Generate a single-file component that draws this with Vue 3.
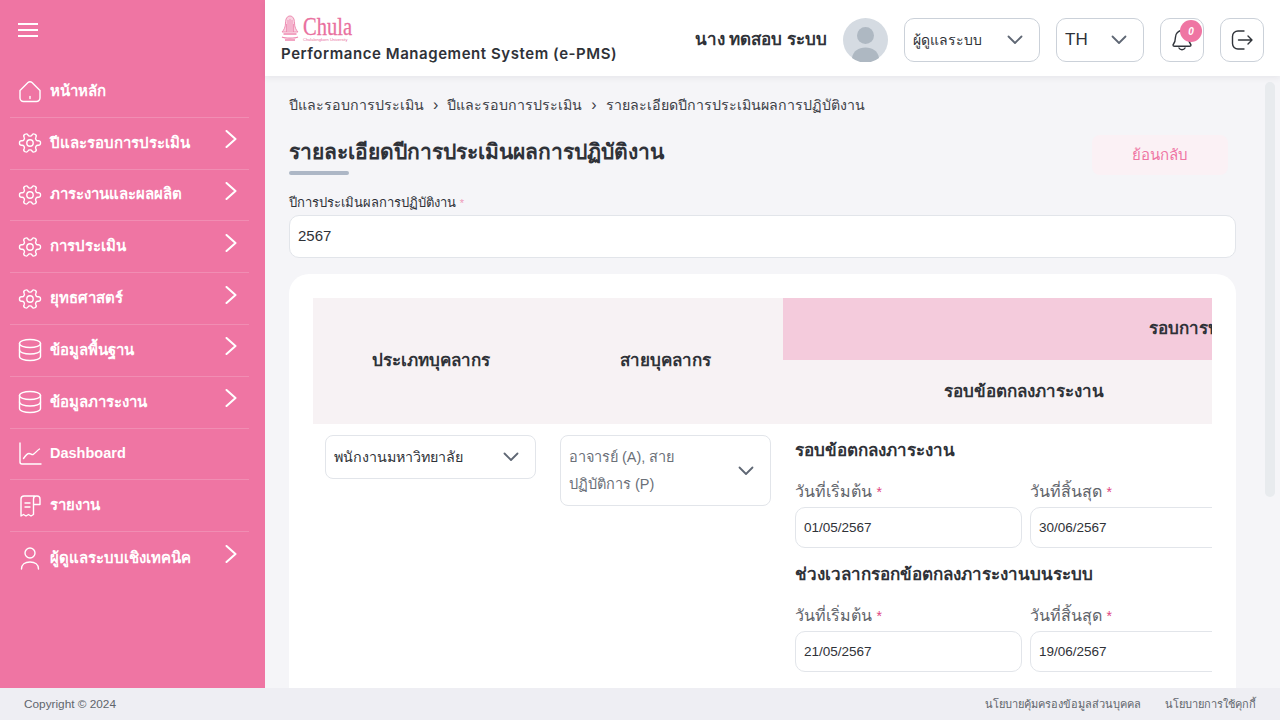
<script setup>
const gear = 'gear'
const db = 'db'
const menu = [
  { label: 'หน้าหลัก', icon: 'home', arrow: false },
  { label: 'ปีและรอบการประเมิน', icon: gear, arrow: true },
  { label: 'ภาระงานและผลผลิต', icon: gear, arrow: true },
  { label: 'การประเมิน', icon: gear, arrow: true },
  { label: 'ยุทธศาสตร์', icon: gear, arrow: true },
  { label: 'ข้อมูลพื้นฐาน', icon: db, arrow: true },
  { label: 'ข้อมูลภาระงาน', icon: db, arrow: true },
  { label: 'Dashboard', icon: 'chart', arrow: false, latin: true },
  { label: 'รายงาน', icon: 'report', arrow: false },
  { label: 'ผู้ดูแลระบบเชิงเทคนิค', icon: 'user', arrow: true }
]
const groups = [
  { title: 'รอบข้อตกลงภาระงาน', start: '01/05/2567', end: '30/06/2567' },
  { title: 'ช่วงเวลากรอกข้อตกลงภาระงานบนระบบ', start: '21/05/2567', end: '19/06/2567' }
]
</script>

<template>
  <div class="app">
    <div class="main">
      <aside class="sidebar">
        <div class="burger"><span></span><span></span><span></span></div>
        <nav class="menu">
          <a v-for="m in menu" :key="m.label" class="item">
            <svg class="ico" viewBox="0 0 24 24" fill="none" stroke="#fff" stroke-width="1.4" stroke-linecap="round" stroke-linejoin="round">
              <template v-if="m.icon === 'home'">
                <path d="M2 11.5 10 3.6a2.8 2.8 0 0 1 4 0l8 7.900V19a3.500 3.500 0 0 1-3.500 3.500h-13A3.500 3.500 0 0 1 2 19z" />
                <path d="M12 17.500v2" />
              </template>
              <template v-else-if="m.icon === 'gear'">
                <path transform="rotate(90 12 12)" d="M12.220 1.500h-.44a2 2 0 0 0-2 2v.680a2 2 0 0 1-1 1.730l-.43.250a2 2 0 0 1-2 0l-.150-.080a2 2 0 0 0-2.730.730l-.22.380a2 2 0 0 0 .730 2.730l.150.100a2 2 0 0 1 1 1.720v.510a2 2 0 0 1-1 1.740l-.150.090a2 2 0 0 0-.730 2.730l.22.380a2 2 0 0 0 2.730.730l.150-.080a2 2 0 0 1 2 0l.43.250a2 2 0 0 1 1 1.730V20.500a2 2 0 0 0 2 2h.44a2 2 0 0 0 2-2v-.680a2 2 0 0 1 1-1.730l.43-.250a2 2 0 0 1 2 0l.150.080a2 2 0 0 0 2.730-.730l.22-.390a2 2 0 0 0-.730-2.730l-.150-.080a2 2 0 0 1-1-1.740v-.500a2 2 0 0 1 1-1.740l.150-.090a2 2 0 0 0 .730-2.730l-.22-.380a2 2 0 0 0-2.730-.730l-.150.080a2 2 0 0 1-2 0l-.43-.250a2 2 0 0 1-1-1.730V3.500a2 2 0 0 0-2-2z" />
                <circle cx="12" cy="12" r="3.200" />
              </template>
              <template v-else-if="m.icon === 'db'">
                <ellipse cx="12" cy="5.500" rx="10.500" ry="4" />
                <path d="M1.500 5.500v13c0 2.200 4.700 4 10.500 4s10.500-1.800 10.500-4v-13" />
                <path d="M1.500 12c0 2.200 4.700 4 10.500 4s10.500-1.800 10.500-4" />
              </template>
              <template v-else-if="m.icon === 'chart'">
                <path d="M2 1v19a2 2 0 0 0 2 2h19" />
                <path d="M5.500 16.500c2-3 3.500-5 5.500-5s2.500 1.500 4 1 4-4 6.500-5.500" />
              </template>
              <template v-else-if="m.icon === 'report'">
                <path d="M17 2H6a3 3 0 0 0-3 3v17l2.500-1.500L8 22l2.500-1.500L13 22l2.500-1.500V5a3 3 0 0 1 3-3h.500a3 3 0 0 1 3 3v5.500h-6.500" />
                <path d="M7 9h5M7 13h5" />
              </template>
              <template v-else>
                <circle cx="12" cy="7" r="5" />
                <path d="M3.500 23c0-4.500 3.500-7 8.500-7s8.500 2.500 8.500 7" />
              </template>
            </svg>
            <span class="label" :class="{ latin: m.latin }">{{ m.label }}</span>
            <svg v-if="m.arrow" class="arrow" viewBox="0 0 12 18" fill="none" stroke="#fff" stroke-width="2" stroke-linecap="round" stroke-linejoin="round"><path d="M1.500 1 10.500 9l-9 8" /></svg>
          </a>
        </nav>
      </aside>

      <div class="right">
        <header class="topbar">
          <div class="brand">
            <div class="logo">
              <svg class="emblem" viewBox="0 0 18 26" fill="none" stroke="#ee8fb3" stroke-width="1">
                <path d="M9 1c-3 0-4.500 3-4.500 7S3 15 1 17h16c-2-2-3.500-5-3.500-9S12 1 9 1z" fill="#f9d3e1" />
                <path d="M7 5v11M9 4v12M11 5v11M5.500 9v8M12.500 9v8" stroke="#ee86ae" stroke-width=".8" />
                <path d="M2.500 19h13M1 22c3 1.500 13 1.500 16 0M4 25h10" stroke="#ee86ae" stroke-width="1.300" />
              </svg>
              <div class="logotext">
                <span class="chula">Chula</span>
                <span class="uni">Chulalongkorn University</span>
              </div>
            </div>
            <div class="system">Performance Management System (e-PMS)</div>
          </div>
          <div class="tools">
            <span class="name">นาง ทดสอบ ระบบ</span>
            <svg class="avatar" viewBox="0 0 45 44">
              <ellipse cx="22.500" cy="22" rx="22.500" ry="22" fill="#d5dbe2" />
              <circle cx="22.500" cy="17.500" r="8.500" fill="#aeb8c2" />
              <path d="M9 40c1-7 6.500-10.500 13.500-10.500S35 33 36 40a22 22 0 0 1-27 0z" fill="#aeb8c2" />
            </svg>
            <div class="sel role"><span>ผู้ดูแลระบบ</span>
              <svg class="chev" viewBox="0 0 16 10" fill="none" stroke="#5f6774" stroke-width="1.800" stroke-linecap="round" stroke-linejoin="round"><path d="m1.500 1.500 6.500 6.500 6.500-6.500" /></svg>
            </div>
            <div class="sel lang"><span>TH</span>
              <svg class="chev" viewBox="0 0 16 10" fill="none" stroke="#5f6774" stroke-width="1.800" stroke-linecap="round" stroke-linejoin="round"><path d="m1.500 1.500 6.500 6.500 6.500-6.500" /></svg>
            </div>
            <button class="iconbtn">
              <svg class="bell" viewBox="0 0 24 24" fill="none" stroke="#30343a" stroke-width="1.400" stroke-linecap="round" stroke-linejoin="round">
                <path d="M12 2.500a6.500 6.500 0 0 0-6.500 6.500c0 4.500-1 6-2.500 8 0 .8.500 1.200 1.500 1.200h15c1 0 1.500-.4 1.500-1.200-1.500-2-2.500-3.500-2.500-8A6.500 6.500 0 0 0 12 2.500z" />
                <path d="M9 20c.6 1.200 1.600 1.700 3 1.700s2.400-.5 3-1.700" />
              </svg>
              <span class="badge">0</span>
            </button>
            <button class="iconbtn">
              <svg class="logout" viewBox="0 0 24 24" fill="none" stroke="#30343a" stroke-width="1.400" stroke-linecap="round" stroke-linejoin="round">
                <path d="M14 3H8a5.500 5.500 0 0 0-5.500 5.500v7A5.500 5.500 0 0 0 8 21h6" />
                <path d="M8.500 12h13.500M18 8l4 4-4 4" />
              </svg>
            </button>
          </div>
        </header>

        <section class="content">
          <div class="scrollbar"></div>
          <div class="crumbs">
            <span>ปีและรอบการประเมิน</span><i>›</i>
            <span>ปีและรอบการประเมิน</span><i>›</i>
            <span>รายละเอียดปีการประเมินผลการปฏิบัติงาน</span>
          </div>
          <div class="titlerow">
            <div>
              <h1>รายละเอียดปีการประเมินผลการปฏิบัติงาน</h1>
              <div class="underline"></div>
            </div>
            <button class="back">ย้อนกลับ</button>
          </div>
          <label class="yearlabel">ปีการประเมินผลการปฏิบัติงาน <em>*</em></label>
          <div class="yearinput">2567</div>

          <div class="card">
            <div class="tablewrap">
              <div class="table">
                <div class="th c1">ประเภทบุคลากร</div>
                <div class="th c2">สายบุคลากร</div>
                <div class="th c3">รอบการประเมิน</div>
                <div class="th c4">รอบข้อตกลงภาระงาน</div>
                <div class="th c5"></div>

                <div class="cell">
                  <div class="pick one"><span>พนักงานมหาวิทยาลัย</span>
                    <svg class="chev" viewBox="0 0 16 10" fill="none" stroke="#5f6774" stroke-width="1.800" stroke-linecap="round" stroke-linejoin="round"><path d="m1.500 1.500 6.500 6.500 6.500-6.500" /></svg>
                  </div>
                </div>
                <div class="cell">
                  <div class="pick two"><span>อาจารย์ (A), สาย ปฏิบัติการ (P)</span>
                    <svg class="chev" viewBox="0 0 16 10" fill="none" stroke="#5f6774" stroke-width="1.800" stroke-linecap="round" stroke-linejoin="round"><path d="m1.500 1.500 6.500 6.500 6.500-6.500" /></svg>
                  </div>
                </div>
                <div class="cell dates">
                  <div v-for="g in groups" :key="g.title" class="group">
                    <h3>{{ g.title }}</h3>
                    <div class="pair">
                      <div>
                        <label>วันที่เริ่มต้น <em>*</em></label>
                        <div class="date">{{ g.start }}</div>
                      </div>
                      <div>
                        <label>วันที่สิ้นสุด <em>*</em></label>
                        <div class="date">{{ g.end }}</div>
                      </div>
                    </div>
                  </div>
                </div>
              </div>
            </div>
          </div>
        </section>
      </div>
    </div>
    <footer class="footer">
      <span class="copy">Copyright © 2024</span>
      <div class="links"><span>นโยบายคุ้มครองข้อมูลส่วนบุคคล</span><span>นโยบายการใช้คุกกี้</span></div>
    </footer>
  </div>
</template>

<style scoped>
.app { width: 1280px; height: 720px; display: flex; flex-direction: column; overflow: hidden; font-family: "Liberation Sans", "Noto Sans", sans-serif; color: #2f3238; background: #f5f5f8; }
.main { flex: 1; min-height: 0; display: flex; }
.sidebar { width: 265px; flex: none; background: #ef75a3; color: #fff; padding: 23px 16px 0 10px; box-sizing: border-box; }
.burger { margin-left: 8px; width: 20px; height: 14px; display: flex; flex-direction: column; justify-content: space-between; }
.burger span { height: 2px; background: #fff; display: block; }
.menu { margin-top: 29px; }
.item { height: 51.800px; display: flex; align-items: center; border-bottom: 1px solid #f18db3; padding: 0 8px; box-sizing: border-box; }
.item:last-child { border-bottom: 0; }
.ico { width: 24px; height: 24px; flex: none; }
.label { margin-left: 8px; flex: 1; font-size: 15px; font-weight: 600; white-space: nowrap; margin-top: -1px; }
.latin { font-size: 14.500px; }
.arrow { width: 12px; height: 18px; margin: -8px 4px 0 0; }
.right { flex: 1; min-width: 0; display: flex; flex-direction: column; }
.topbar { height: 76px; flex: none; background: #fff; box-shadow: 0 2px 6px rgba(60, 60, 80, .08); display: flex; align-items: center; justify-content: space-between; padding: 0 16px; position: relative; z-index: 1; box-sizing: border-box; }
.logo { display: flex; gap: 4px; align-items: flex-start; height: 26px; margin-top: 1px; }
.emblem { width: 18px; height: 26px; }
.logotext { display: flex; flex-direction: column; padding-top: 2px; }
.chula { font-family: "Liberation Serif", serif; color: #e9709e; font-size: 26px; line-height: 20px; display: inline-block; transform: scaleX(.79); transform-origin: left; -webkit-text-stroke: .3px #e9709e; }
.uni { font-size: 4px; color: #e9709e; line-height: 5px; white-space: nowrap; }
.system { margin-top: 3px; font-family: "Inter", sans-serif; font-size: 15px; font-weight: 600; letter-spacing: .56px; color: #2f3238; white-space: nowrap; }
.tools { display: flex; align-items: center; gap: 16px; padding-top: 4px; }
.name { font-size: 17px; font-weight: 700; white-space: nowrap; color: #2f3238; margin-top: -4px; }
.avatar { width: 45px; height: 44px; }
.sel { height: 44px; box-sizing: border-box; border: 1px solid #cbd1d9; border-radius: 10px; display: flex; align-items: center; justify-content: space-between; padding: 0 16px 0 8px; background: #fff; font-size: 14px; }
.role { width: 136px; }
.lang { width: 88px; font-size: 17px; }
.chev { width: 16px; height: 10px; flex: none; }
.iconbtn { width: 44px; height: 44px; padding: 0; box-sizing: border-box; border: 1px solid #cbd1d9; border-radius: 10px; background: #fff; display: flex; align-items: center; justify-content: center; position: relative; }
.bell, .logout { width: 24px; height: 24px; }
.badge { position: absolute; top: 1px; right: 1px; width: 22px; height: 22px; border-radius: 50%; background: #ef75a3; color: #fff; font-size: 10px; font-style: italic; font-weight: 700; display: flex; align-items: center; justify-content: center; }
.content { flex: 1; min-height: 0; overflow: hidden; position: relative; padding: 16px 44px 0 24px; box-sizing: border-box; background: #f5f5f8; }
.scrollbar { position: absolute; right: 5px; top: 6px; width: 10px; height: 415px; border-radius: 5px; background: #e8ebee; }
.crumbs { display: flex; align-items: center; gap: 9px; font-size: 14.200px; line-height: 26px; color: #3c4046; white-space: nowrap; }
.crumbs i { font-style: normal; font-size: 16px; }
.titlerow { display: flex; justify-content: space-between; margin-top: 19px; height: 62px; }
h1 { margin: 0; font-size: 21px; line-height: 30px; font-weight: 700; color: #2f3238; white-space: nowrap; }
.underline { width: 60px; height: 4px; border-radius: 2px; background: #adb7c6; margin-top: 4px; }
.back { width: 136px; height: 40px; margin-top: -2px; margin-right: 8px; border: 0; border-radius: 8px; background: #fbf1f5; color: #ef75a3; font: inherit; font-size: 15px; }
.yearlabel { display: block; font-size: 13px; line-height: 18px; margin-top: -5px; color: #2f3238; }
.yearlabel em { color: #ef9ab9; font-size: 11px; }
em { color: #e0457f; font-style: normal; }
.yearinput { margin-top: 3px; height: 43px; box-sizing: border-box; border: 1px solid #e2e5ea; border-radius: 10px; background: #fff; padding: 0 8px 3px; display: flex; align-items: center; font-size: 15px; }
.card { margin-top: 16px; background: #fff; border-radius: 20px; padding: 24px 24px 0; height: 460px; box-sizing: border-box; }
.tablewrap { overflow: hidden; height: 100%; }
.table { display: grid; grid-template-columns: 235px 235px 482px 366px; grid-template-rows: 62px 64px auto; width: 1318px; }
.th { display: flex; align-items: center; justify-content: center; font-size: 17px; font-weight: 700; background: #f7f2f4; white-space: nowrap; padding-bottom: 4px; box-sizing: border-box; }
.c1 { grid-row: 1 / 3; grid-column: 1; }
.c2 { grid-row: 1 / 3; grid-column: 2; }
.c3 { grid-row: 1; grid-column: 3 / 5; background: #f4cbdc; }
.c4 { grid-row: 2; grid-column: 3; }
.c5 { grid-row: 2; grid-column: 4; }
.cell { padding: 11px 12px; }
.pick { box-sizing: border-box; border: 1px solid #e2e5ea; border-radius: 8px; display: flex; align-items: center; justify-content: space-between; padding: 0 16px 0 8px; font-size: 14.300px; background: #fff; }
.one { height: 44px; }
.two { height: 71px; color: #6b7078; line-height: 27px; font-size: 14.500px; }
.two span { width: 130px; }
.dates { padding-top: 0; }
.group h3 { margin: 0; font-size: 17px; line-height: 26px; font-weight: 700; padding-top: 14px; white-space: nowrap; }
.pair { display: grid; grid-template-columns: 227px 227px; gap: 8px; margin-top: 18px; }
.pair label { display: block; font-size: 16px; line-height: 20px; color: #5f646b; }
.pair label em { font-size: 14px; }
.date { margin-top: 5px; height: 41px; box-sizing: border-box; border: 1px solid #e2e5ea; border-radius: 10px; display: flex; align-items: center; padding: 0 8px; font-size: 13.500px; }
.footer { height: 32px; flex: none; background: #eeeef3; display: flex; align-items: center; justify-content: space-between; padding: 0 24px; font-size: 11px; color: #60656c; z-index: 2; }
.copy { font-size: 11.800px; }
.links { display: flex; gap: 24px; }
</style>

<style>
html, body { margin: 0; padding: 0; }
</style>
